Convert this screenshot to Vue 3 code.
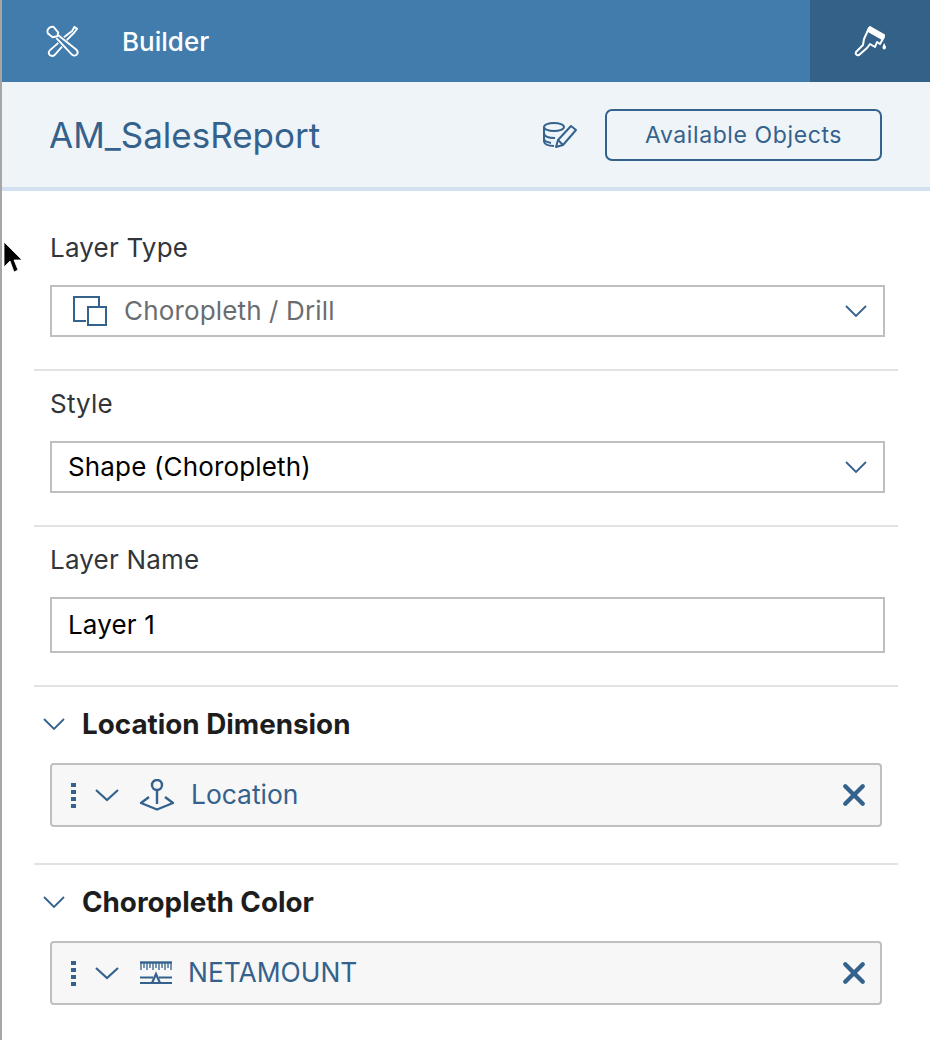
<script setup>
const fields = [
  { label: "Layer Type", value: "Choropleth / Drill", icon: true, select: true },
  { label: "Style", value: "Shape (Choropleth)", select: true },
  { label: "Layer Name", value: "Layer 1" },
];
const tokens = [
  { title: "Location Dimension", name: "Location", icon: "pin" },
  { title: "Choropleth Color", name: "NETAMOUNT", icon: "measure" },
];
</script>

<template>
  <div class="panel">
    <header class="top-bar">
      <div class="top-title">
        <svg class="tools-icon" viewBox="0 0 34 34" fill="none" stroke="#fff" stroke-width="2" stroke-linejoin="round">
          <path d="M1 9 6 13 11 12 12 8 7 2C3 1 -1 5 1 9Z" />
          <path d="M12 11 31 26C33 28 33 30 31.500 31.500 30 33 27.500 33 26 31L10 14" />
          <path d="M18 13 27 6 29 2 32 4 29 8 21 16" />
          <path d="M12 19 3 27C1 29 2 31 3 32 5 33.500 6.500 33 8 32L16 23" />
        </svg>
        <span>Builder</span>
      </div>
      <div class="brush-tab">
        <svg class="brush-icon" viewBox="0 0 33 31" fill="none" stroke="#fff" stroke-width="2" stroke-linejoin="round">
          <path d="M15 2 30 11 26 18 23 16 21 21 16 18 13 22 5 29C3 30 1 28 2 26L9 19 10 13Z" />
          <path d="M16 1 30 9 28 13 14 5Z" fill="#fff" />
          <path d="M30 17C31 19 32 20 32 21.500 32 24 28.500 24 28.500 21.500 28.500 20 29.500 19 30 17Z" fill="#fff" stroke="none" />
        </svg>
      </div>
    </header>

    <div class="sub-header">
      <h1 class="report-name">AM_SalesReport</h1>
      <div class="sub-actions">
        <svg class="db-icon" viewBox="0 0 36 28" fill="none" stroke="#34628c" stroke-width="2">
          <ellipse cx="12" cy="6" rx="10" ry="4" />
          <path d="M2 6V20C2 23 6 25 12 25" />
          <path d="M2 12C2 15 6 17 13 17" />
          <path d="M2 18C2 19.500 4 21 9 22" />
          <path d="M14 26 16 19 29 5 34 9 21 24 14 26Z" fill="#eff4f9" stroke-linejoin="round" />
          <path d="M16 19 21 24" />
        </svg>
        <button class="objects-button">Available Objects</button>
      </div>
    </div>

    <section v-for="field in fields" :key="field.label" class="field-section">
      <div class="field-label">{{ field.label }}</div>
      <div class="input-box" :class="{ 'is-muted': field.icon, 'is-select': field.select }">
        <svg v-if="field.icon" class="layers-icon" viewBox="0 0 34 30" fill="none" stroke="#34628c" stroke-width="2">
          <path d="M13 25H1V1H26V10" />
          <rect x="15" y="11" width="18" height="18" />
        </svg>
        <span class="input-text">{{ field.value }}</span>
        <svg v-if="field.select" class="chevron" viewBox="0 0 24 14" fill="none" stroke="#34628c" stroke-width="1.800">
          <path d="M2 2 12 12 22 2" />
        </svg>
      </div>
    </section>

    <section v-for="token in tokens" :key="token.title" class="token-section">
      <div class="token-title">
        <svg class="chevron" viewBox="0 0 24 14" fill="none" stroke="#34628c" stroke-width="1.800">
          <path d="M2 2 12 12 22 2" />
        </svg>
        <span>{{ token.title }}</span>
      </div>
      <div class="token">
        <span class="grip"><i></i><i></i><i></i><i></i></span>
        <svg class="token-chevron" viewBox="0 0 26 14" fill="none" stroke="#34628c" stroke-width="2.200">
          <path d="M2 2 13 12 24 2" />
        </svg>
        <svg v-if="token.icon === 'pin'" class="pin-icon" viewBox="0 0 36 32" fill="none" stroke="#34628c" stroke-width="2.400">
          <circle cx="18" cy="6" r="5" />
          <path d="M18 11V25" />
          <path d="M10 18 2 24 18 30.500 34 24 26 18" stroke-linejoin="round" />
        </svg>
        <svg v-else class="measure-icon" viewBox="0 0 32 24" fill="none" stroke="#34628c">
          <path d="M0 1.500H32" stroke-width="2.400" />
          <path d="M1 2V9M4 2V7M7 2V9M10 2V7M13 2V9M16 2V7M19 2V9M22 2V7M25 2V9M28 2V7M31 2V9" stroke-width="1.300" />
          <path d="M0 16.500H13M19 16.500H32M0 22H32" stroke-width="2.200" />
          <path d="M16 13 20 22H12Z" stroke-width="2.200" />
        </svg>
        <span class="token-name" :class="token.icon">{{ token.name }}</span>
        <svg class="close-icon" viewBox="0 0 22 22" fill="none" stroke="#34628c" stroke-width="4" stroke-linecap="round">
          <path d="M3 3 19 19M19 3 3 19" />
        </svg>
      </div>
    </section>

    <svg class="cursor" viewBox="0 0 22 36">
      <path d="M1 1V26L7 20 11 31 15 29 11 19H19Z" fill="#000" stroke="#fff" stroke-width="0.800" />
    </svg>
  </div>
</template>

<style>
html,
body {
  margin: 0;
  background: #fff;
}
</style>

<style scoped>
.panel {
  position: relative;
  width: 930px;
  height: 1040px;
  box-sizing: border-box;
  overflow: hidden;
  border-left: 2px solid #a6a6a6;
  background: #fff;
  font-family: Inter, "Noto Sans", sans-serif;
  color: #32363a;
}

.top-bar {
  display: flex;
  justify-content: space-between;
  height: 82px;
  background: #427cac;
}

.top-title {
  display: flex;
  align-items: center;
  gap: 42px;
  padding-left: 44px;
  color: #fff;
  font-size: 26px;
  font-weight: 500;
}

.tools-icon {
  width: 34px;
  height: 32px;
}

.brush-tab {
  display: flex;
  align-items: center;
  justify-content: center;
  width: 120px;
  background: #346187;
}

.brush-icon {
  width: 33px;
  height: 31px;
}

.sub-header {
  display: flex;
  align-items: center;
  justify-content: space-between;
  height: 105px;
  padding: 0 48px 0 47px;
  border-bottom: 4px solid #d3e0ef;
  background: #eff4f9;
}

.report-name {
  margin: 0;
  color: #34628c;
  font-size: 35px;
  font-weight: 400;
}

.sub-actions {
  display: flex;
  align-items: center;
  gap: 27px;
}

.db-icon {
  width: 36px;
  height: 28px;
}

.objects-button {
  width: 277px;
  height: 52px;
  padding: 0;
  border: 2px solid #34628c;
  border-radius: 7px;
  background: transparent;
  color: #34628c;
  font-family: inherit;
  font-size: 23px;
  letter-spacing: 0.6px;
}

.field-section {
  box-sizing: border-box;
  height: 156px;
  margin: 0 32px 0 32px;
  padding: 18px 16px 0;
  border-bottom: 2px solid #e2e2e2;
}

.field-section:first-of-type {
  height: 180px;
  padding-top: 42px;
}

.field-section:nth-of-type(3) {
  height: 160px;
}

.field-label {
  height: 30px;
  font-size: 26px;
  line-height: 30px;
  letter-spacing: 0.2px;
}

.input-box {
  display: flex;
  align-items: center;
  box-sizing: border-box;
  width: 835px;
  height: 52px;
  margin-top: 22px;
  padding: 0 16px;
  border: 2px solid #bfbfbf;
  color: #000;
  font-size: 26px;
}

.input-text {
  position: relative;
  top: -1px;
  letter-spacing: 0.15px;
}

.input-box.is-muted {
  padding-left: 21px;
  color: #6a6d70;
}

.input-box.is-muted .input-text {
  margin-left: 17px;
}

.input-box:not(.is-select) {
  height: 56px;
}

.is-select .chevron {
  margin-left: auto;
  margin-right: -1px;
}

.layers-icon {
  width: 34px;
  height: 30px;
}

.chevron {
  flex: none;
  width: 24px;
  height: 14px;
}

.token-section {
  box-sizing: border-box;
  height: 178px;
  margin: 0 32px 0 32px;
  border-bottom: 2px solid #e2e2e2;
}

.token-section:last-of-type {
  border-bottom: 0;
}

.token-title {
  display: flex;
  align-items: center;
  gap: 16px;
  height: 36px;
  padding: 19px 0 0 8px;
  color: #1d1d1d;
  font-size: 27.800px;
  font-weight: 700;
}

.token {
  display: flex;
  align-items: center;
  box-sizing: border-box;
  width: 832px;
  height: 64px;
  margin: 21px 0 0 16px;
  padding: 0 17px 0 19px;
  border: 2px solid #bfbfbf;
  border-radius: 4px;
  background: #f7f7f7;
}

.grip {
  display: flex;
  flex-direction: column;
  gap: 3px;
  width: 5px;
}

.grip i {
  width: 5px;
  height: 4px;
  background: #34628c;
}

.token-chevron {
  width: 26px;
  height: 14px;
  margin-left: 18px;
}

.pin-icon {
  width: 36px;
  height: 32px;
  margin-left: 19px;
}

.measure-icon {
  width: 32px;
  height: 24px;
  margin-left: 20px;
}

.token-name {
  position: relative;
  top: -1px;
  margin-left: 16px;
  color: #34628c;
  font-size: 26.400px;
}

.close-icon {
  width: 24px;
  height: 24px;
  margin-left: auto;
  margin-right: -3px;
}

.cursor {
  position: absolute;
  top: 241px;
  left: 1px;
  width: 22px;
  height: 36px;
}
</style>
